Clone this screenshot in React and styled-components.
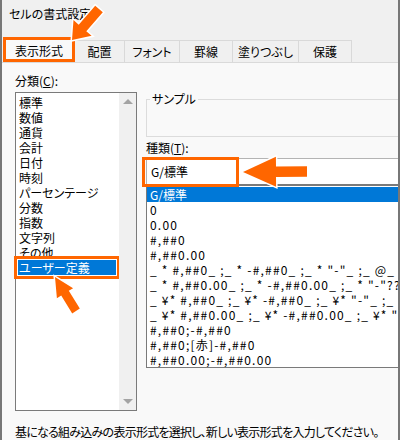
import React from "react";
import styled, { createGlobalStyle } from "styled-components";

const ORANGE = "#ff6600";

const GlobalStyle = createGlobalStyle`
  html, body {
    margin: 0;
    padding: 0;
    background: #f0f0f0;
  }
  body {
    font-family: "Noto Sans CJK JP", "Noto Sans", sans-serif;
    font-feature-settings: "palt";
    color: #000;
  }
  * {
    box-sizing: border-box;
  }
`;

const Window = styled.div`
  position: relative;
  width: 400px;
  height: 440px;
  overflow: hidden;
  background: #f0f0f0;
  border-left: 2px solid #777;
  border-right: 2px solid #777;
  display: flex;
  flex-direction: column;
`;

const TitleBar = styled.div`
  height: 40px;
  flex-shrink: 0;
  padding: 6px 0 0 7px;
  font-size: 12px;
  line-height: 16px;
`;

const TabStrip = styled.div`
  display: flex;
  align-items: flex-end;
  height: 22px;
  flex-shrink: 0;
  padding-left: 1px;
`;

const Tab = styled.div`
  width: ${(p) => p.$w}px;
  height: 22px;
  flex-shrink: 0;
  border-top: 1px solid #d9d9d9;
  border-right: 1px solid #d9d9d9;
  background: #f0f0f0;
  font-size: 12px;
  line-height: 21px;
  text-align: center;
  white-space: nowrap;
`;

const ActiveTab = styled(Tab)`
  height: 25px;
  border: 3px solid ${ORANGE};
  background: #f9f9f9;
  padding-top: 2px;
  line-height: 17px;
`;

const Panel = styled.div`
  flex: 1;
  display: flex;
  flex-direction: column;
  background: #f9f9f9;
  border-top: 1px solid #dadada;
  padding: 10px 0 0 13px;
`;

const Columns = styled.div`
  display: flex;
`;

const LeftCol = styled.div`
  width: 122px;
  flex-shrink: 0;
  display: flex;
  flex-direction: column;
`;

const RightCol = styled.div`
  width: 300px;
  flex-shrink: 0;
  margin-left: 9px;
  display: flex;
  flex-direction: column;
`;

const Label = styled.div`
  font-size: 12px;
  line-height: 16px;
  white-space: nowrap;
  margin-top: ${(p) => p.$mt || 0}px;
`;

const CategoryBox = styled.div`
  margin-top: 3px;
  height: 319px;
  border: 1px solid #7a7a7a;
  background: #fff;
  display: flex;
`;

const CategoryItems = styled.div`
  flex: 1;
  padding: 2px 3px 0 2px;
`;

const Item = styled.div`
  height: 15px;
  line-height: 15px;
  font-size: 12px;
  padding-left: ${(p) => p.$pl || 1}px;
  white-space: nowrap;
  overflow: hidden;
  letter-spacing: ${(p) => p.$ls || 0}px;
  background: ${(p) => (p.$selected ? "#0078d7" : "transparent")};
  color: ${(p) => (p.$selected ? "#fff" : "#000")};
  outline: ${(p) => (p.$marked ? `3px solid ${ORANGE}` : "none")};
  outline-offset: 1px;
`;

const ScrollBar = styled.div`
  width: 17px;
  background: #f0f0f0;
  display: flex;
  flex-direction: column;
  justify-content: space-between;
`;

const ScrollButton = styled.div`
  height: 17px;
  display: flex;
  align-items: center;
  justify-content: center;
  &::after {
    content: "";
    border-left: 5px solid transparent;
    border-right: 5px solid transparent;
    ${(p) => (p.$down ? "border-top" : "border-bottom")}: 5px solid #a3a3a3;
  }
`;

const SampleGroup = styled.fieldset`
  margin: 18px 0 0 0;
  height: 46px;
  border: 1px solid #dcdcdc;
  padding: 0 0 0 3px;
  legend {
    font-size: 12px;
    line-height: 16px;
    padding: 0 2px;
  }
`;

const InputWrap = styled.div`
  position: relative;
  margin-top: 2px;
`;

const Input = styled.div`
  height: 27px;
  background: #fff;
  border: 1px solid #b4b4b4;
  border-bottom-color: #7a7a7a;
  padding-left: 4px;
  font-size: 12px;
  line-height: 25px;
`;

const Marker = styled.div`
  position: absolute;
  left: -4px;
  top: -1px;
  width: 97px;
  height: 30px;
  border: 3px solid ${ORANGE};
`;

const FormatList = styled.div`
  height: 183px;
  border: 1px solid #7a7a7a;
  background: #fff;
  padding-top: 1px;
  overflow: hidden;
`;

const Footer = styled.div`
  margin-top: 13px;
  font-size: 12px;
  line-height: 16px;
  letter-spacing: -0.75px;
  white-space: nowrap;
`;

const Overlay = styled.svg`
  position: absolute;
  top: 0;
  left: -2px;
  width: 400px;
  height: 440px;
  pointer-events: none;
`;

const arrowPoints = (tip, tail, headLen, headW, shaftW) => {
  const dx = tip[0] - tail[0];
  const dy = tip[1] - tail[1];
  const len = Math.hypot(dx, dy);
  const ux = dx / len;
  const uy = dy / len;
  const nx = -uy;
  const ny = ux;
  const bx = tip[0] - ux * headLen;
  const by = tip[1] - uy * headLen;
  const p = (x, y, k) => `${(x + nx * k).toFixed(1)},${(y + ny * k).toFixed(1)}`;
  return [
    p(tail[0], tail[1], shaftW / 2),
    p(bx, by, shaftW / 2),
    p(bx, by, headW / 2),
    `${tip[0]},${tip[1]}`,
    p(bx, by, -headW / 2),
    p(bx, by, -shaftW / 2),
    p(tail[0], tail[1], -shaftW / 2),
  ].join(" ");
};

const Arrow = ({ tip, tail, headLen, headW, shaftW }) => (
  <polygon
    points={arrowPoints(tip, tail, headLen, headW, shaftW)}
    fill={ORANGE}
    stroke="#fff"
    strokeWidth="3"
    strokeLinejoin="miter"
    paintOrder="stroke"
  />
);

const tabs = [
  ["配置", 50],
  ["フォント", 55],
  ["罫線", 53],
  ["塗りつぶし", 66],
  ["保護", 53],
];

const categories = [
  "標準",
  "数値",
  "通貨",
  "会計",
  "日付",
  "時刻",
  "パーセンテージ",
  "分数",
  "指数",
  "文字列",
  "その他",
  "ユーザー定義",
];

const formats = [
  "G/標準",
  "0",
  "0.00",
  "#,##0",
  "#,##0.00",
  '_ * #,##0_ ;_ * -#,##0_ ;_ * "-"_ ;_ @_ ',
  '_ * #,##0.00_ ;_ * -#,##0.00_ ;_ * "-"??_ ;_ @_ ',
  '_ ¥* #,##0_ ;_ ¥* -#,##0_ ;_ ¥* "-"_ ;_ @_ ',
  '_ ¥* #,##0.00_ ;_ ¥* -#,##0.00_ ;_ ¥* "-"??_ ;_ @_ ',
  "#,##0;-#,##0",
  "#,##0;[赤]-#,##0",
  "#,##0.00;-#,##0.00",
];

const App = () => {
  return (
    <>
      <GlobalStyle />
      <Window>
        <TitleBar>セルの書式設定</TitleBar>
        <TabStrip>
          <ActiveTab $w={72}>表示形式</ActiveTab>
          {tabs.map(([name, w]) => (
            <Tab key={name} $w={w}>
              {name}
            </Tab>
          ))}
        </TabStrip>
        <Panel>
          <Columns>
            <LeftCol>
              <Label>
                分類(<u>C</u>):
              </Label>
              <CategoryBox>
                <CategoryItems>
                  {categories.map((c, i) => (
                    <Item key={c} $selected={i === 11} $marked={i === 11}>
                      {c}
                    </Item>
                  ))}
                </CategoryItems>
                <ScrollBar>
                  <ScrollButton />
                  <ScrollButton $down />
                </ScrollBar>
              </CategoryBox>
            </LeftCol>
            <RightCol>
              <SampleGroup>
                <legend>サンプル</legend>
              </SampleGroup>
              <Label $mt={3}>
                種類(<u>T</u>):
              </Label>
              <InputWrap>
                <Input>G/標準</Input>
                <Marker />
              </InputWrap>
              <FormatList>
                {formats.map((f, i) => (
                  <Item key={f} $pl={3} $ls={i === 0 ? 0 : 1.2} $selected={i === 0}>
                    {f}
                  </Item>
                ))}
              </FormatList>
            </RightCol>
          </Columns>
          <Footer>
            基になる組み込みの表示形式を選択し、新しい表示形式を入力してください。
          </Footer>
        </Panel>
        <Overlay viewBox="0 0 400 440">
          <Arrow tip={[72, 40]} tail={[99, 9]} headLen={16} headW={24} shaftW={10} />
          <Arrow tip={[55, 277]} tail={[76, 311]} headLen={19} headW={19} shaftW={9} />
          <Arrow tip={[243, 172]} tail={[307, 171.5]} headLen={33} headW={30} shaftW={10.5} />
        </Overlay>
      </Window>
    </>
  );
};

export default App;
